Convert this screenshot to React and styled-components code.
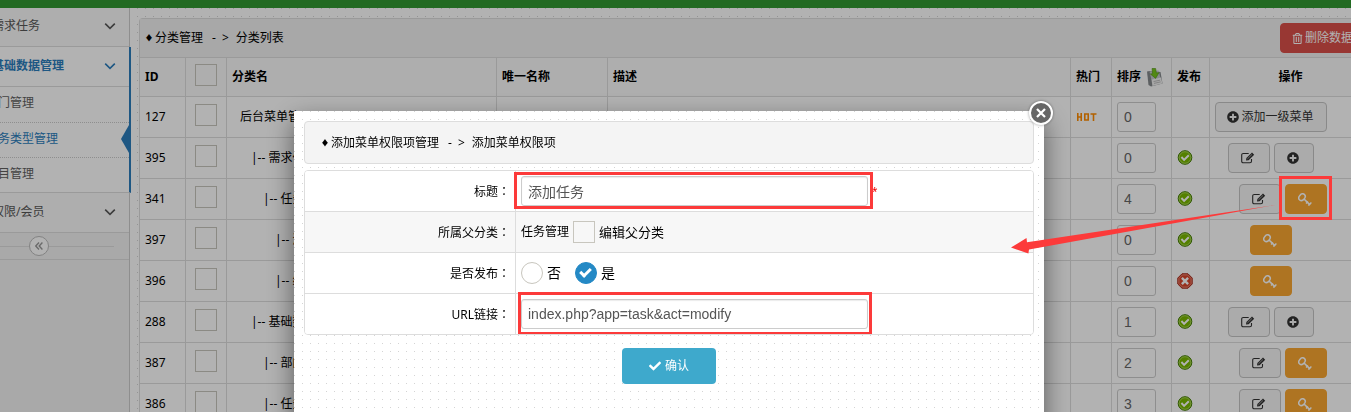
import React from 'react'
import styled, { createGlobalStyle, css } from 'styled-components'
import { FaCheck, FaPlusCircle, FaRegTrashAlt } from 'react-icons/fa'

const menu = [
  { label: '需求任务' },
  { label: '基础数据管理', open: true, items: ['部门管理', '任务类型管理', '项目管理'], current: '任务类型管理' },
  { label: '权限/会员' },
]

const rows = [
  { id: 127, level: 0, name: '后台菜单管理', hot: true, sort: 0, actions: 'root' },
  { id: 395, level: 1, name: '需求任务', sort: 0, state: 'on', actions: 'parent' },
  { id: 341, level: 2, name: '任务管理', sort: 4, state: 'on', actions: 'child' },
  { id: 397, level: 3, name: '添加任务', sort: 0, state: 'on', actions: 'leaf' },
  { id: 396, level: 3, name: '编辑任务', sort: 0, state: 'off', actions: 'leaf' },
  { id: 288, level: 1, name: '基础数据管理', sort: 1, state: 'on', actions: 'parent' },
  { id: 387, level: 2, name: '部门管理', sort: 2, state: 'on', actions: 'child' },
  { id: 386, level: 2, name: '任务类型管理', sort: 3, state: 'on', actions: 'child' },
]

const Chevron = () => (
  <svg width="12" height="12" viewBox="0 0 12 12" fill="none" stroke="currentColor" strokeWidth="1.6">
    <path d="M1.2 3.6 6 8.4l4.8-4.8" />
  </svg>
)

const EditIcon = () => (
  <svg width="14" height="12" viewBox="0 0 14 12" fill="none" stroke="currentColor">
    <path d="M10.5 7v2.2c0 1-.6 1.6-1.6 1.6H2.3c-1 0-1.6-.6-1.6-1.6V3.1c0-1 .6-1.6 1.6-1.6h5.4" strokeWidth="1.1" />
    <path d="M5 8.6 5.4 6 11 .6 13.2 2.7 7.6 8.2z" fill="currentColor" stroke="none" />
    <path d="m6.4 6.9 4.6-4.5" stroke="#ddd" strokeWidth=".6" />
  </svg>
)

const KeyIcon = () => (
  <svg width="14" height="13" viewBox="0 0 14 13" fill="none" stroke="currentColor">
    <ellipse cx="4" cy="4.2" rx="3.6" ry="2.8" transform="rotate(-50 4 4.2)" strokeWidth="1.5" />
    <path d="m6 6 6 5.8" strokeWidth="1.6" />
    <path d="m8 10.400 2-2M10.400 12.600l3-3" strokeWidth="1.4" />
  </svg>
)

const DiskIcon = () => (
  <svg width="18" height="19" viewBox="0 0 18 19">
    <path d="M1 3.5 3.500 3 14.500 4 16.500 15.500 5 18.500 2.500 17z" fill="#85898c" />
    <path d="M3.5 3.5 12.5 2.5l2 7.500-9 2z" fill="#c4c8ca" />
    <path d="m5.5 11.500 9.500-2 1.400 6-10 2.500z" fill="#f0f0f0" />
    <path d="m7.5 13.600 6.600-1.500M8 15.400l6.600-1.500" stroke="#999" strokeWidth=".6" />
    <path d="M6 .5h3.600l.8 4.500 2.600-.4-3.400 5.800L4.400 6l2.200-.3z" fill="#76c51c" stroke="#4d9210" strokeWidth=".6" />
  </svg>
)

const StateIcon = ({ state }) =>
  state === 'on' ? (
    <svg width="16" height="16" viewBox="0 0 16 16">
      <circle cx="8" cy="7.5" r="6.8" fill="#79b800" stroke="#3f7a00" strokeWidth="1" />
      <circle cx="8" cy="7.5" r="5.8" fill="none" stroke="#b5dc6a" strokeWidth=".8" />
      <path d="m4.4 7 2.7 2.9 4.7-4.7" fill="none" stroke="#fff" strokeWidth="2" />
    </svg>
  ) : (
    <svg width="16" height="16" viewBox="0 0 16 16">
      <path d="M5 .8h6L15.2 5v6L11 15.2H5L.8 11V5z" fill="#d9452c" stroke="#a32a1c" />
      <path d="M5.4 1.9h5.2l3.5 3.5v5.2l-3.5 3.5H5.4l-3.5-3.5V5.4z" fill="none" stroke="#ee9b8a" strokeWidth=".8" />
      <path d="m4.9 4.9 6.2 6.2m0-6.2-6.2 6.2" stroke="#fff" strokeWidth="2.4" />
    </svg>
  )

const HotIcon = () => (
  <svg width="21" height="8" viewBox="0 0 21 8" fill="none" stroke="#ff8c00" strokeWidth="1.6">
    <path d="M1.800 0v8M5.200 0v8M1.800 4h3.400M8.800 1h3.400v6H8.800zM14.500 1h6M17.500 1v7" />
  </svg>
)

const RowActions = ({ kind }) => (
  <Actions $align={kind === 'child' ? 'flex-end' : 'center'}>
    {kind === 'root' && <Button $wide><FaPlusCircle size={12} />添加一级菜单</Button>}
    {(kind === 'parent' || kind === 'child') && <Button aria-label="编辑"><EditIcon /></Button>}
    {kind === 'parent' && <Button $narrow aria-label="添加"><FaPlusCircle size={12} /></Button>}
    {(kind === 'child' || kind === 'leaf') && <Button $tone="orange" aria-label="权限"><KeyIcon /></Button>}
  </Actions>
)

const Breadcrumb = ({ parent, current }) => (
  <Crumbs>
    <Diamond>♦</Diamond>
    {parent}
    <Separator><span>-</span><span>&gt;</span></Separator>
    {current}
  </Crumbs>
)

const Colon = () => <ColonMark>：</ColonMark>

const Sidebar = () => (
  <Side>
    <SideInner>
      {menu.map((group) => (
        <MenuGroup key={group.label} $open={group.open}>
          <MenuLink href="#" $open={group.open}>
            {group.label}
            <Chevron />
          </MenuLink>
          {group.items && group.items.map((item) => (
            <SubLink href="#" key={item} $current={item === group.current}>{item}</SubLink>
          ))}
        </MenuGroup>
      ))}
      <Collapse>
        <CollapseButton aria-label="收起菜单">
          <svg width="8" height="8" viewBox="0 0 8 8" fill="none" stroke="currentColor" strokeWidth="1.4">
            <path d="M4 .5.8 4 4 7.5M7.4.5 4.2 4l3.2 3.5" />
          </svg>
        </CollapseButton>
      </Collapse>
    </SideInner>
  </Side>
)

const CategoryList = () => (
  <Content>
    <Widget>
      <WidgetHeader>
        <Breadcrumb parent="分类管理" current="分类列表" />
        <Button $tone="red" $wide><FaRegTrashAlt size={11} />删除数据</Button>
      </WidgetHeader>
      <Table>
        <colgroup>
          <Col $w={45} /><Col $w={41} /><Col $w={270} /><Col $w={111} /><Col />
          <Col $w={41} /><Col $w={60} /><Col $w={38} /><Col $w={162} />
        </colgroup>
        <thead>
          <tr>
            <th>ID</th>
            <th><Check type="checkbox" aria-label="全选" /></th>
            <th>分类名</th>
            <th>唯一名称</th>
            <th>描述</th>
            <th>热门</th>
            <th><SortHead>排序<DiskIcon /></SortHead></th>
            <th>发布</th>
            <CenterTh>操作</CenterTh>
          </tr>
        </thead>
        <tbody>
          {rows.map((row) => (
            <tr key={row.id}>
              <td>{row.id}</td>
              <td><Check type="checkbox" aria-label={`选择 ${row.id}`} /></td>
              <NameCell $level={row.level}>{row.level > 0 && '|-- '}{row.name}</NameCell>
              <td />
              <td />
              <td>{row.hot && <HotIcon />}</td>
              <td><SortInput aria-label="排序" defaultValue={row.sort} /></td>
              <td>{row.state && <StateIcon state={row.state} />}</td>
              <td><RowActions kind={row.actions} /></td>
            </tr>
          ))}
        </tbody>
      </Table>
    </Widget>
  </Content>
)

const Dialog = () => (
  <Modal role="dialog">
    <Close aria-label="关闭">
      <svg width="10" height="10" viewBox="0 0 10 10" stroke="#fff" strokeWidth="2.2">
        <path d="m1 1 8 8M9 1 1 9" />
      </svg>
    </Close>
    <DialogHeader>
      <Breadcrumb parent="添加菜单权限项管理" current="添加菜单权限项" />
    </DialogHeader>
    <Form>
      <FormRow>
        <Label htmlFor="title">标题<Colon /></Label>
        <Field>
          <Marked $inset="-4px -5px -3px -7px"><TextInput id="title" defaultValue="添加任务" /></Marked>
          <Required>*</Required>
        </Field>
      </FormRow>
      <FormRow $shade>
        <Label as="span">所属父分类<Colon /></Label>
        <Field>
          <span>任务管理</span>
          <Option $size={13}><Check type="checkbox" />编辑父分类</Option>
        </Field>
      </FormRow>
      <FormRow>
        <Label as="span">是否发布<Colon /></Label>
        <Field $gap={14}>
          <Option $size={14}><Radio name="publish" />否</Option>
          <Option $size={14}><Radio name="publish" defaultChecked />是</Option>
        </Field>
      </FormRow>
      <FormRow>
        <Label htmlFor="url">URL链接<Colon /></Label>
        <Field>
          <Marked $inset="-7px -4px -6px -3px"><TextInput id="url" defaultValue="index.php?app=task&act=modify" /></Marked>
        </Field>
      </FormRow>
    </Form>
    <Submit><FaCheck size={12} />确认</Submit>
  </Modal>
)

const Pointer = () => (
  <PointerLayer>
    <rect x="1280.5" y="177.5" width="50" height="41" fill="none" stroke="#fc3a3a" strokeWidth="3" />
    <path d="M1011 247.5 1026.5 238l.5 4.3L1275 205 1029 249.5l-.6 4z" fill="#fc3a3a" />
  </PointerLayer>
)

const App = () => {
  return (
    <>
      <GlobalStyle />
      <TopBar />
      <Page>
        <Sidebar />
        <CategoryList />
      </Page>
      <Overlay>
        <Dialog />
      </Overlay>
      <Pointer />
    </>
  )
}

export default App

const GlobalStyle = createGlobalStyle`
  *, *::before, *::after {
    box-sizing: border-box;
  }
  body {
    margin: 0;
    overflow: hidden;
    color: #000;
    background: #fff;
    font: 12px/20px "Noto Sans", "Noto Sans CJK SC", sans-serif;
  }
  button, input {
    margin: 0;
    font: inherit;
  }
  svg {
    display: block;
    flex-shrink: 0;
  }
`
// one grey pixel every 8px
const dots = css`
  background-color: #fff;
  background-image:
    linear-gradient(to right, transparent 1px, #fff 1px),
    linear-gradient(#d4d4d4 1px, #fff 1px);
  background-size: 8px 8px;
`
const TopBar = styled.header`
  height: 8px;
  background: #319931;
`
const Page = styled.div`
  display: flex;
  height: calc(100vh - 8px);
`
const Side = styled.nav`
  display: flex;
  justify-content: flex-end;
  flex: none;
  width: 131px;
  overflow: hidden;
  background: linear-gradient(to right, #f2f2f2 129px, #ccc 129px, #ccc 130px, #fff 130px);
`
const SideInner = styled.div`
  flex: none;
  width: 191px;
  margin-top: -1px;
`
const MenuGroup = styled.div`
  margin-right: 2px;
  border-bottom: 1px solid #ddd;
  ${({ $open }) => $open && 'margin-right: 0; border-right: 2px solid #2b7dbc; background: #fff;'}
`
const MenuLink = styled.a`
  display: flex;
  align-items: center;
  justify-content: space-between;
  height: ${({ $open }) => ($open ? '40px' : '39px')};
  padding: 0 13px 2px 52px;
  border-bottom: ${({ $open }) => ($open ? '1px solid #ddd' : '0')};
  color: ${({ $open }) => ($open ? '#2b7dbc' : '#585858')};
  background: ${({ $open }) => ($open ? '#fff' : '#f9f9f9')};
  font-weight: ${({ $open }) => ($open ? 'bold' : 'normal')};
  text-decoration: none;
`
const SubLink = styled.a`
  position: relative;
  display: block;
  height: 35px;
  padding: 6px 0 0 46px;
  color: ${({ $current }) => ($current ? '#2b7dbc' : '#616161')};
  text-decoration: none;
  & + & {
    border-top: 1px dotted #ccc;
  }
  ${({ $current }) => $current && css`
    &::after {
      content: '';
      position: absolute;
      top: 2px;
      right: 0;
      border: solid transparent;
      border-width: 14px 8px 14px 0;
      border-right-color: #2b7dbc;
    }
  `}
`
const Collapse = styled.div`
  display: flex;
  align-items: center;
  height: 27px;
  margin-right: 2px;
  padding: 0 15px 0 29px;
  border-bottom: 1px solid #ddd;
  background: #f3f3f3;
  &::before, &::after {
    content: '';
    width: 60px;
    height: 1px;
    background: #ddd;
  }
  &::after {
    flex: 1;
  }
`
const CollapseButton = styled.button`
  display: flex;
  align-items: center;
  justify-content: center;
  width: 20px;
  height: 20px;
  padding: 0;
  border: 1px solid #bbb;
  border-radius: 50%;
  color: #999;
  background: #fff;
`
const Content = styled.main`
  flex: 1;
  min-width: 0;
  margin-right: -20px;
  padding: 10px 0 0 8px;
  ${dots}
  background-position: 6px 0;
`
const Widget = styled.section`
  border: 1px solid #ddd;
  border-right: 0;
  border-radius: 4px 0 0 0;
  background: #fff;
`
const WidgetHeader = styled.div`
  display: flex;
  align-items: center;
  justify-content: space-between;
  height: 38px;
  padding: 0 5px;
  background: #f1f1f1;
`
const Crumbs = styled.div`
  display: flex;
  align-items: center;
`
const Diamond = styled.span`
  width: 10px;
  font-size: 8px;
`
const Separator = styled.span`
  display: flex;
  gap: 6px;
  margin: 0 7px 0 9px;
`
const Col = styled.col`
  width: ${({ $w }) => ($w ? `${$w}px` : 'auto')};
`
const Table = styled.table`
  width: 100%;
  table-layout: fixed;
  border-collapse: separate;
  border-spacing: 0;
  th, td {
    padding: 0 5px;
    border-top: 1px solid #ddd;
    border-left: 1px solid #ddd;
    text-align: left;
    white-space: nowrap;
  }
  th:first-child, td:first-child {
    border-left: 0;
  }
  th {
    height: 39px;
    background: #f9f9f9;
  }
  td {
    height: 41px;
  }
  th:nth-child(2), td:nth-child(2) {
    padding: 0 0 4px 9px;
  }
`
const CenterTh = styled.th`
  && {
    text-align: center;
  }
`
const NameCell = styled.td`
  && {
    padding-left: ${({ $level }) => ($level ? 12 + $level * 12 : 13)}px;
  }
`
const SortHead = styled.span`
  display: flex;
  align-items: center;
  gap: 5px;
`
const Check = styled.input`
  appearance: none;
  display: block;
  flex: none;
  width: 22px;
  height: 22px;
  border: 1px solid #c8c6be;
  background: transparent;
`
const SortInput = styled.input`
  display: block;
  width: 39px;
  height: 30px;
  padding: 0 6px;
  border: 1px solid #ccc;
  border-radius: 3px;
  color: #666;
  background: transparent;
  font: 14px "Liberation Sans", sans-serif;
`
const Actions = styled.div`
  display: flex;
  justify-content: ${({ $align }) => $align};
  gap: 4px;
  width: 112px;
`
const tones = {
  plain: 'border-color: #c4c4c4; color: #333; background: #f5f5f5;',
  orange: 'border-color: #faa732; color: #fff; background: #faa732;',
  red: 'border-color: #da4f49; color: #fff; background: #da4f49;',
}
const Button = styled.button`
  display: flex;
  flex: none;
  align-items: center;
  justify-content: center;
  gap: 2px;
  width: ${({ $wide, $narrow }) => ($wide ? 'auto' : $narrow ? '40px' : '42px')};
  height: 30px;
  padding: ${({ $wide }) => ($wide ? '0 12px 0 11px' : '0 12px 0 10px')};
  border: 1px solid;
  border-radius: 4px;
  ${({ $tone = 'plain' }) => tones[$tone]}
`
const Overlay = styled.div`
  position: fixed;
  inset: 0;
  display: flex;
  justify-content: center;
  padding: 111px 13px 0 0;
  background: rgba(0, 0, 0, 0.3);
`
const Modal = styled.div`
  position: relative;
  width: 750px;
  height: 400px;
  padding: 10px;
  box-shadow: 0 10px 25px rgba(0, 0, 0, 0.5);
  ${dots}
`
const Close = styled.button`
  position: absolute;
  top: -10px;
  right: -9px;
  display: flex;
  align-items: center;
  justify-content: center;
  width: 24px;
  height: 24px;
  padding: 0;
  border: 2px solid #fff;
  border-radius: 50%;
  background: #666;
  box-shadow: 0 0 3px rgba(0, 0, 0, 0.4);
`
const DialogHeader = styled.div`
  height: 43px;
  padding: 11px 16px;
  border: 1px solid #ddd;
  border-radius: 4px;
  background: #f4f4f4;
`
const Form = styled.form`
  margin-top: 6px;
  overflow: hidden;
  border: 1px solid #ddd;
  border-radius: 4px;
  background: #fff;
`
const FormRow = styled.div`
  display: flex;
  height: 41px;
  border-top: 1px solid #ddd;
  background: ${({ $shade }) => ($shade ? '#f7f7f7' : '#fff')};
  &:first-child {
    height: 40px;
    border-top: 0;
  }
`
const Label = styled.label`
  flex: none;
  width: 211px;
  padding: 10px 5px 0 0;
  border-right: 1px solid #ddd;
  text-align: right;
`
const ColonMark = styled.span`
  font-family: "Noto Sans CJK TC", sans-serif;
`
const Field = styled.div`
  display: flex;
  flex: 1;
  align-items: center;
  gap: ${({ $gap = 4 }) => $gap}px;
  padding-left: 5px;
`
const Marked = styled.span`
  position: relative;
  &::after {
    content: '';
    position: absolute;
    inset: ${({ $inset }) => $inset};
    border: 3px solid #fc3a3a;
    pointer-events: none;
  }
`
const TextInput = styled.input`
  display: block;
  width: 347px;
  height: 30px;
  padding: 0 6px;
  border: 1px solid #ccc;
  border-radius: 3px;
  color: #555;
  background: #fff;
  box-shadow: inset 0 1px 1px rgba(0, 0, 0, 0.08);
  font: 14px "Liberation Sans", "Noto Sans CJK SC", sans-serif;
`
const Required = styled.span`
  color: #e00;
  font-size: 10px;
`
const Option = styled.label`
  display: flex;
  align-items: center;
  gap: 4px;
  font-size: ${({ $size }) => $size}px;
`
const Radio = styled(Check).attrs({ type: 'radio' })`
  border-radius: 50%;
  background: #fff;
  &:checked {
    border-color: #2489c5;
    background: #2489c5;
  }
  &:checked::after {
    content: '';
    display: block;
    width: 11px;
    height: 7px;
    margin: 5px 4px;
    border: solid #fff;
    border-width: 0 0 3px 3px;
    transform: rotate(-45deg);
  }
`
const Submit = styled.button`
  display: flex;
  align-items: center;
  justify-content: center;
  gap: 4px;
  width: 94px;
  height: 36px;
  margin: 13px auto 0;
  border: 0;
  border-radius: 4px;
  color: #fff;
  background: #3ea9cc;
`
const PointerLayer = styled.svg`
  position: absolute;
  inset: 0;
  width: 100%;
  height: 100%;
  pointer-events: none;
`
